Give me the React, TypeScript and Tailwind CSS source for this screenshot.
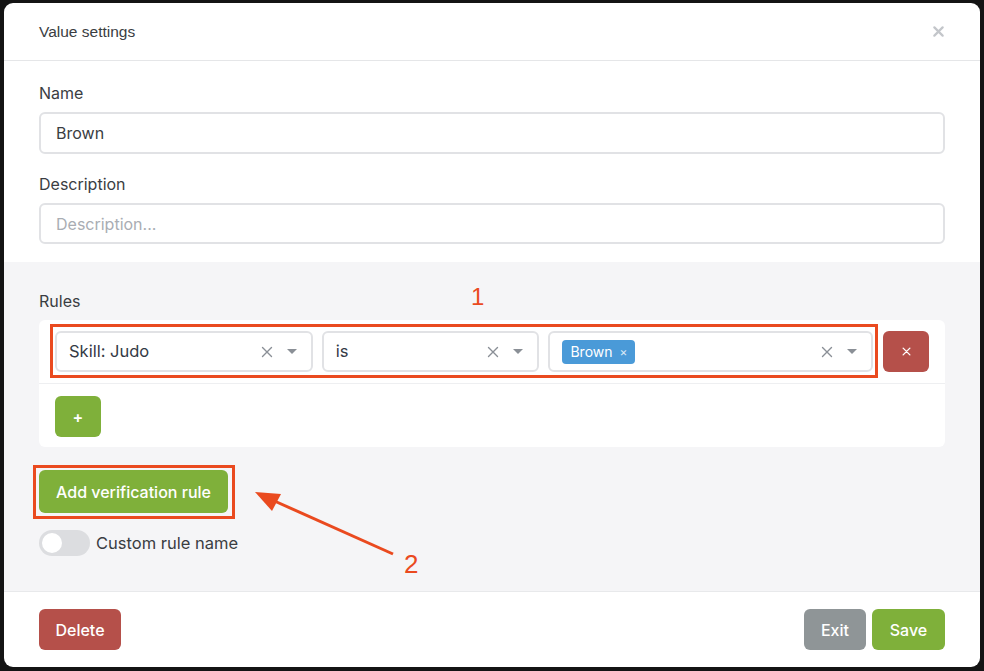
import React from "react";

const Chevron = () => (
  <svg width="10" height="6" viewBox="0 0 10 6" className="text-[#8a8f96]">
    <path d="M0 0 L10 0 L5 5 Z" fill="currentColor" />
  </svg>
);

const XIcon = ({ size = 12, className = "", sw = 1.4 }: { size?: number; className?: string; sw?: number }) => (
  <svg width={size} height={size} viewBox="0 0 12 12" className={className}>
    <path d="M1.5 1.5 L10.5 10.5 M10.5 1.5 L1.5 10.5" stroke="currentColor" strokeWidth={sw} strokeLinecap="round" />
  </svg>
);

const SelectBox = ({ children, className }: { children: React.ReactNode; className: string }) => (
  <div className={`h-[41px] flex items-center rounded-[6px] border-2 border-[#e1e2e5] bg-white pl-[12px] pr-[14px] ${className}`}>
    <div className="flex-1 flex items-center text-[16.5px] text-[#343a45]">{children}</div>
    <XIcon size={12} className="text-[#8a8f96] mr-[14px]" />
    <Chevron />
  </div>
);

export default function App() {
  return (
    <div className="w-[984px] h-[671px] bg-[#141414] p-[3px] pl-[4px] overflow-hidden" style={{ fontFamily: "Inter, 'Noto Sans', sans-serif" }}>
      <div className="relative w-[976px] h-[664px] bg-white rounded-[9px] flex flex-col overflow-hidden">
        {/* header */}
        <div className="h-[58px] flex items-center justify-between pl-[35px] pr-[36px] border-b border-[#e5e6e8]">
          <span className="text-[15.5px] text-[#3a3d42]" style={{ fontFamily: "'Liberation Sans', Arial, sans-serif" }}>Value settings</span>
          <XIcon size={11} sw={2.4} className="text-[#c3c6ca]" />
        </div>
        {/* body */}
        <div className="px-[35px] pt-[22px] pb-[18px] flex flex-col">
          <label className="text-[16px] text-[#3a3d42] leading-[20px]">Name</label>
          <div className="mt-[9px] h-[42px] rounded-[6px] border-2 border-[#e1e2e5] flex items-center px-[15px] text-[16px] text-[#3a3d42]">Brown</div>
          <label className="mt-[20px] text-[16px] text-[#3a3d42] leading-[20px]">Description</label>
          <div className="mt-[9px] h-[41px] rounded-[6px] border-2 border-[#e1e2e5] flex items-center px-[15px] text-[16px] text-[#a9adb3]">Description...</div>
        </div>
        {/* rules section */}
        <div className="bg-[#f5f5f7] px-[35px] pt-[29px] pb-[35px] border-b border-[#e8e9eb]">
          <div className="text-[16px] text-[#3a3d42] leading-[20px]">Rules</div>
          <div className="mt-[9px] bg-white rounded-[6px]">
            <div className="flex items-center gap-[9px] pl-[16px] pr-[16px] pt-[11px] pb-[11px] border-b border-[#eeeff1]">
              <SelectBox className="w-[258px]">Skill: Judo</SelectBox>
              <SelectBox className="w-[218px]">is</SelectBox>
              <SelectBox className="w-[325px] pl-[11px]">
                <span className="bg-[#4a9ad8] text-white text-[14px] rounded-[4px] h-[24px] px-[8px] flex items-center gap-[7px]">
                  Brown <span className="text-[12px] text-[#d8e8f6]">×</span>
                </span>
              </SelectBox>
              <button className="ml-[1px] w-[46px] h-[41px] rounded-[6px] bg-[#b5504a] text-white flex items-center justify-center">
                <XIcon size={9} sw={1.8} className="text-white" />
              </button>
            </div>
            <div className="pl-[16px] pt-[12px] pb-[10px]">
              <button className="w-[46px] h-[41px] rounded-[6px] bg-[#7fb03a] text-white text-[16px] font-semibold flex items-center justify-center">+</button>
            </div>
          </div>
          <button className="mt-[23px] h-[43px] w-[189px] rounded-[6px] bg-[#7fb03a] text-white text-[16px] font-medium">Add verification rule</button>
          <div className="mt-[17px] flex items-center gap-[6px]">
            <div className="w-[51px] h-[26px] rounded-full bg-[#dcdde0] flex items-center px-[3px]">
              <div className="w-[20px] h-[20px] rounded-full bg-white" />
            </div>
            <span className="text-[16.5px] text-[#3a3d42]">Custom rule name</span>
          </div>
        </div>
        {/* footer */}
        <div className="flex-1 flex items-center justify-between px-[35px]">
          <button className="h-[41px] w-[82px] rounded-[6px] bg-[#b5504a] text-white text-[16px] font-medium">Delete</button>
          <div className="flex gap-[6px]">
            <button className="h-[41px] w-[62px] rounded-[6px] bg-[#8f9597] text-white text-[16px] font-medium">Exit</button>
            <button className="h-[41px] w-[73px] rounded-[6px] bg-[#7fb03a] text-white text-[16px] font-medium">Save</button>
          </div>
        </div>

        {/* annotations */}
        <div className="absolute left-[46px] top-[321px] w-[828px] h-[54px] border-[3px] border-[#ea4a1f] pointer-events-none" />
        <div className="absolute left-[467px] top-[282px] text-[24px] text-[#ea4a1f] leading-none" style={{ fontFamily: "'Liberation Sans', Arial, sans-serif" }}>1</div>
        <div className="absolute left-[29px] top-[462px] w-[202px] h-[54px] border-[3px] border-[#ea4a1f] pointer-events-none" />
        <div className="absolute left-[400px] top-[548px] text-[26px] text-[#ea4a1f] leading-none" style={{ fontFamily: "'Liberation Sans', Arial, sans-serif" }}>2</div>
        <svg className="absolute left-0 top-0 pointer-events-none" width="976" height="664">
          <line x1="389" y1="551" x2="266" y2="496" stroke="#ea4a1f" strokeWidth="3" />
          <path d="M251 489 L277 491 L268 508 Z" fill="#ea4a1f" />
        </svg>
      </div>
    </div>
  );
}
